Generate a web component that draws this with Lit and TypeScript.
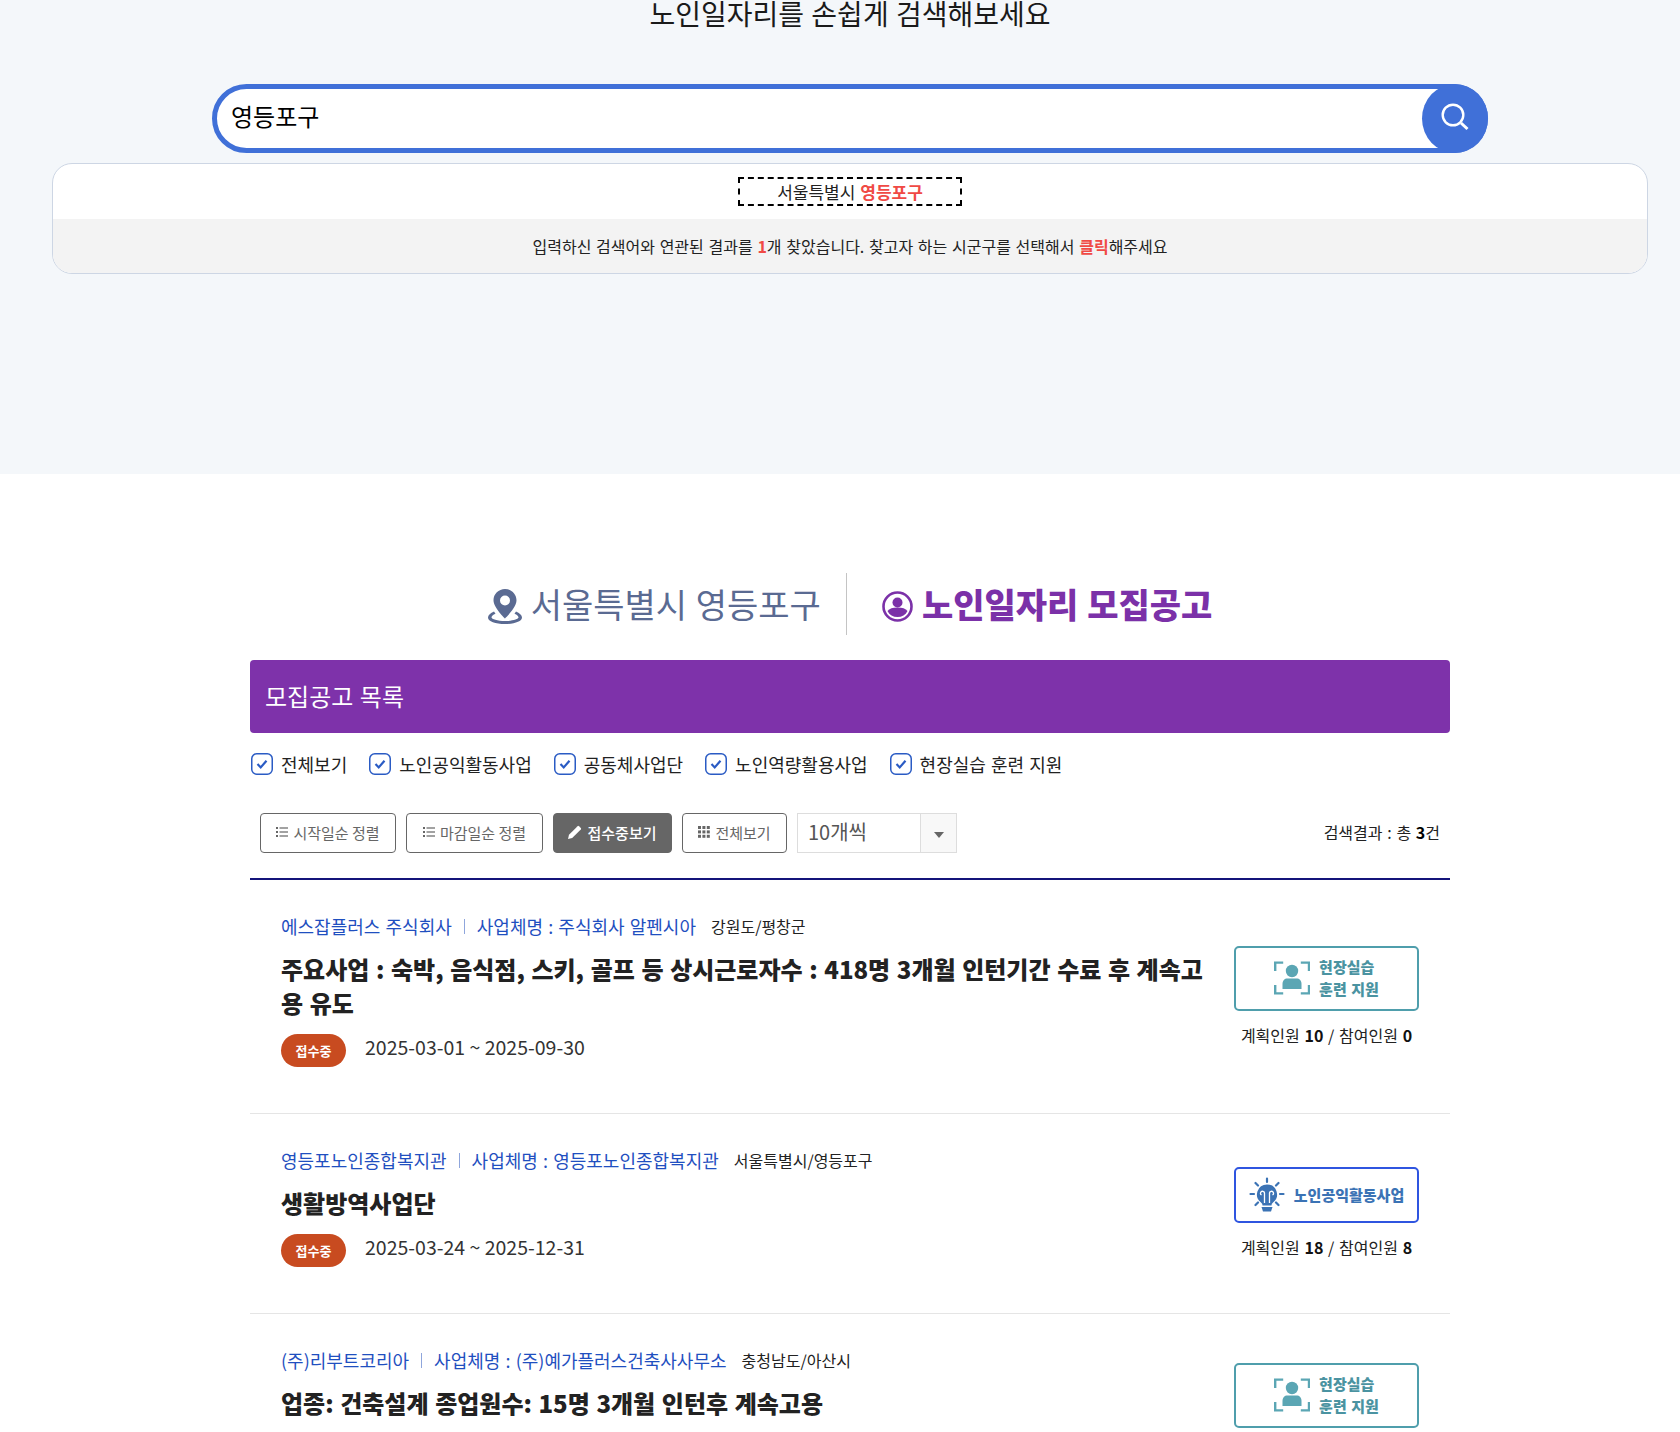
import { LitElement, html, css, svg } from 'lit';
import { customElement } from 'lit/decorators.js';

const checkIcon = html`<svg class="check" viewBox="0 0 22 22" width="22" height="22">
  <rect x="0.75" y="0.75" width="20.5" height="20.5" rx="5" fill="#fff" stroke="#2a5bc4" stroke-width="1.5"></rect>
  <path d="M6.5 11l3.2 3.4 5.8-6.6" fill="none" stroke="#2a5bc4" stroke-width="2.2"></path>
</svg>`;

const listIcon = html`<svg viewBox="0 0 12 12" width="12" height="12" fill="currentColor">
  <rect x="0" y="1" width="2" height="2"></rect><rect x="3.5" y="1.4" width="8.5" height="1.2"></rect>
  <rect x="0" y="5" width="2" height="2"></rect><rect x="3.5" y="5.4" width="8.5" height="1.2"></rect>
  <rect x="0" y="9" width="2" height="2"></rect><rect x="3.5" y="9.4" width="8.5" height="1.2"></rect>
</svg>`;

const gridIcon = html`<svg viewBox="0 0 12 12" width="12" height="12" fill="currentColor">
  ${[0, 4.4, 8.8].map((y) => [0, 4.4, 8.8].map((x) => svg`<rect x=${x} y=${y} width="3" height="3"></rect>`))}
</svg>`;

const pencilIcon = html`<svg viewBox="0 0 14 14" width="14" height="14" fill="#fff">
  <path d="M0 14l1-4.2L9.6 1.2a1 1 0 0 1 1.4 0l1.800 1.800a1 1 0 0 1 0 1.400L4.200 13z"></path>
</svg>`;

const fieldIcon = html`<svg viewBox="0 0 36 34" width="36" height="34">
  <g fill="none" stroke="#5ba6b4" stroke-width="2.4">
    <path d="M1.2 10V1.600h8M26.800 1.600h8.200V10M1.200 24v8.400h8M26.800 32.400h8.200V24"></path>
  </g>
  <circle cx="18" cy="10" r="6.200" fill="#5ba6b4"></circle>
  <path d="M8.500 28v-5c0-3.500 2-5.500 5-5.500h9c3 0 5 2 5 5.500v5z" fill="#5ba6b4"></path>
</svg>`;

const bulbIcon = html`<svg viewBox="0 0 36 36" width="36" height="36">
  <g stroke="#3b73b5" stroke-width="2.200" stroke-linecap="round">
    <path d="M18 1.500v3.500M6.500 6l2.500 2.500M29.500 6L27 8.500M1.500 17H5M31 17h3.500M6.500 28l2.500-2.500M29.500 28L27 25.500"></path>
  </g>
  <path d="M18 7.500a10 10 0 0 0-6 18c1 .8 1.500 1.800 1.500 3h9c0-1.200.5-2.200 1.500-3a10 10 0 0 0-6-18z" fill="#3b73b5"></path>
  <path d="M15.500 26v-9.500a2 2 0 1 0-3 1.500M20.500 26v-9.500a2 2 0 1 1 3 1.500" fill="none" stroke="#fff" stroke-width="1.300"></path>
  <path d="M12.500 30h11l-1.500 4.500h-8z" fill="#3b73b5"></path>
</svg>`;

interface Posting {
  org: string;
  biz: string;
  region: string;
  title: string;
  from: string;
  to: string;
  kind: 'field' | 'public';
  plan: number;
  joined: number;
}

const postings: Posting[] = [
  {
    org: '에스잡플러스 주식회사',
    biz: '주식회사 알펜시아',
    region: '강원도/평창군',
    title: '주요사업 : 숙박, 음식점, 스키, 골프 등 상시근로자수 : 418명 3개월 인턴기간 수료 후 계속고용 유도',
    from: '2025-03-01',
    to: '2025-09-30',
    kind: 'field',
    plan: 10,
    joined: 0,
  },
  {
    org: '영등포노인종합복지관',
    biz: '영등포노인종합복지관',
    region: '서울특별시/영등포구',
    title: '생활방역사업단',
    from: '2025-03-24',
    to: '2025-12-31',
    kind: 'public',
    plan: 18,
    joined: 8,
  },
  {
    org: '(주)리부트코리아',
    biz: '(주)예가플러스건축사사무소',
    region: '충청남도/아산시',
    title: '업종: 건축설계 종업원수: 15명 3개월 인턴후 계속고용',
    from: '2025-03-24',
    to: '2025-12-31',
    kind: 'field',
    plan: 5,
    joined: 0,
  },
];

const filters = ['전체보기', '노인공익활동사업', '공동체사업단', '노인역량활용사업', '현장실습 훈련 지원'];

@customElement('app-root')
export class AppRoot extends LitElement {
  static styles = css`
    :host {
      display: block;
      height: 1432px;
      overflow: hidden;
      background: #fff;
      color: #1a1a1a;
      font-family: "Noto Sans CJK KR", "Noto Sans", sans-serif;
      word-spacing: 0.07em;
    }

    .page {
      width: 1700px;
    }

    .hero {
      height: 474px;
      background: #f4f7fa;
      display: flex;
      flex-direction: column;
      align-items: center;
    }

    .hero h1 {
      margin: -1px 0 0;
      font-size: 28px;
      font-weight: 400;
      line-height: 28px;
      height: 41px;
    }

    .search {
      box-sizing: border-box;
      margin-top: 44px;
      width: 1276px;
      height: 69px;
      border: 5px solid #4070d8;
      border-radius: 35px;
      background: #fff;
      position: relative;
      display: flex;
      align-items: center;
      padding-left: 14px;
      font-size: 24px;
      line-height: 1;
    }

    .search span {
      margin-top: -6px;
      color: #000;
    }

    .search button {
      position: absolute;
      right: -5px;
      top: -5px;
      width: 66px;
      height: 69px;
      padding: 0 0 4px;
      border: 0;
      border-radius: 50%;
      background: #4070d8;
      display: flex;
      align-items: center;
      justify-content: center;
    }

    .suggest {
      box-sizing: border-box;
      margin-top: 10px;
      width: 1596px;
      height: 111px;
      border: 1px solid #cdd6e4;
      border-radius: 20px;
      background: #fff;
      overflow: hidden;
      text-align: center;
    }

    .suggest .hit {
      height: 55px;
      display: flex;
      align-items: flex-start;
      justify-content: center;
    }

    .suggest .hit a {
      box-sizing: border-box;
      margin-top: 13px;
      width: 224px;
      height: 29px;
      border: 2px dashed #000;
      font-size: 17px;
      line-height: 25px;
      color: #222;
    }

    .red {
      color: #f04a45;
      font-weight: 700;
    }

    .suggest .msg {
      height: 55px;
      background: #f3f3f3;
      font-size: 16px;
      line-height: 54px;
      color: #222;
    }

    .heading {
      margin-top: 99px;
      height: 62px;
      display: flex;
      justify-content: center;
      align-items: center;
      font-size: 34px;
      line-height: 44px;
    }

    .heading .place {
      display: flex;
      align-items: center;
      gap: 9px;
      color: #5a6a92;
      padding-right: 25px;
      border-right: 1px solid #c4c4c4;
      height: 62px;
    }

    .heading .place svg {
      margin-top: 4px;
    }

    .heading .notice {
      display: flex;
      align-items: center;
      gap: 9px;
      color: #7b31a8;
      font-weight: 900;
      padding-left: 35px;
    }

    .heading .notice svg {
      margin-top: 4px;
    }

    .board {
      width: 1200px;
      margin: 25px auto 0;
    }

    .bar {
      height: 73px;
      box-sizing: border-box;
      padding-left: 15px;
      background: #7e32aa;
      border-radius: 4px;
      color: #fff;
      font-size: 24px;
      line-height: 72px;
    }

    .filters {
      display: flex;
      gap: 22px;
      margin-top: 19px;
      padding-left: 1px;
      height: 24px;
      align-items: center;
      font-size: 18px;
      color: #222;
    }

    .filters label {
      display: flex;
      align-items: center;
      gap: 8px;
    }

    .tools {
      display: flex;
      align-items: center;
      gap: 10px;
      margin-top: 37px;
      padding: 0 10px;
      height: 40px;
    }

    .tools button {
      box-sizing: border-box;
      height: 40px;
      border: 1px solid #666;
      border-radius: 4px;
      background: #fff;
      color: #666;
      font: inherit;
      font-size: 15px;
      word-spacing: 0;
      display: flex;
      align-items: center;
      justify-content: center;
      gap: 5px;
      padding: 0 0 2px;
    }

    .tools button.on {
      background: #666;
      color: #fff;
      font-weight: 500;
    }

    .select {
      box-sizing: border-box;
      width: 160px;
      height: 40px;
      border: 1px solid #ddd;
      display: flex;
      font-size: 20px;
      line-height: 35px;
      color: #555;
    }

    .select span {
      flex: 1;
      padding-left: 10px;
    }

    .select i {
      width: 35px;
      background: #f8f8f8;
      border-left: 1px solid #ddd;
      display: flex;
      align-items: center;
      justify-content: center;
    }

    .select i::after {
      content: '';
      margin-top: 3px;
      border: 5px solid transparent;
      border-top: 6px solid #666;
      border-bottom: 0;
    }

    .count {
      margin-left: auto;
      margin-top: -2px;
      font-size: 16px;
      color: #222;
    }

    .count b {
      color: #000;
    }

    .list {
      margin-top: 25px;
      border-top: 2px solid #14147a;
    }

    .item {
      display: flex;
      align-items: center;
      gap: 20px;
      padding: 33px 31px 46px;
      border-bottom: 1px solid #e5e5e5;
    }

    .body {
      flex: 1;
      min-width: 0;
    }

    .meta {
      display: flex;
      align-items: center;
      height: 26px;
      font-size: 18px;
      color: #1f4fc0;
    }

    .meta .sep {
      width: 1px;
      height: 15px;
      margin: 0 12px;
      background: #8fa6dc;
    }

    .meta .region {
      margin-left: 15px;
      font-size: 16px;
      color: #222;
    }

    .item h3 {
      margin: 13px 0 0;
      font-size: 24px;
      line-height: 34px;
      font-weight: 900;
      color: #222;
    }

    .period {
      display: flex;
      align-items: center;
      gap: 19px;
      margin-top: 14px;
      font-size: 19.5px;
      color: #333;
      word-spacing: 0;
    }

    .badge {
      width: 65px;
      height: 33px;
      border-radius: 17px;
      background: #c84b20;
      color: #fff;
      font-size: 13px;
      font-weight: 700;
      line-height: 33px;
      text-align: center;
    }

    .period span:last-child {
      margin-top: -8px;
    }

    .side {
      width: 185px;
      flex: none;
      padding-top: 11px;
      text-align: center;
    }

    .kind {
      box-sizing: border-box;
      display: flex;
      align-items: center;
      justify-content: center;
      gap: 9px;
      border: 2px solid;
      border-radius: 5px;
      font-weight: 900;
      font-size: 15px;
      line-height: 22px;
      text-align: left;
    }

    .kind.field {
      height: 65px;
      border-color: #4f9eac;
      color: #4a93a1;
    }

    .kind.public {
      height: 56px;
      border-color: #2f55e0;
      color: #3b73b5;
    }

    .people {
      margin-top: 13px;
      font-size: 16px;
      line-height: 22px;
      color: #222;
    }

    .people b {
      color: #111;
    }
  `;

  renderKind(kind: Posting['kind']) {
    if (kind === 'field') {
      return html`<div class="kind field">${fieldIcon}<div>현장실습<br />훈련 지원</div></div>`;
    }
    return html`<div class="kind public">${bulbIcon}<div>노인공익활동사업</div></div>`;
  }

  renderItem(p: Posting) {
    return html`
      <article class="item">
        <div class="body">
          <div class="meta">
            <span>${p.org}</span><i class="sep"></i><span>사업체명 : ${p.biz}</span>
            <span class="region">${p.region}</span>
          </div>
          <h3>${p.title}</h3>
          <div class="period">
            <span class="badge">접수중</span>
            <span>${p.from} ~ ${p.to}</span>
          </div>
        </div>
        <div class="side">
          ${this.renderKind(p.kind)}
          <div class="people">계획인원 <b>${p.plan}</b> / 참여인원 <b>${p.joined}</b></div>
        </div>
      </article>
    `;
  }

  render() {
    return html`
      <div class="page">
        <section class="hero">
          <h1>노인일자리를 손쉽게 검색해보세요</h1>
          <div class="search">
            <span>영등포구</span>
            <button aria-label="검색">
              <svg viewBox="0 0 28 28" width="28" height="28" fill="none" stroke="#fff" stroke-width="2.400">
                <circle cx="12" cy="12" r="10.300"></circle>
                <path d="M20 20l6.500 6" stroke-width="3"></path>
              </svg>
            </button>
          </div>
          <div class="suggest">
            <div class="hit"><a>서울특별시 <span class="red">영등포구</span></a></div>
            <div class="msg">입력하신 검색어와 연관된 결과를 <span class="red">1</span>개 찾았습니다. 찾고자 하는 시군구를 선택해서 <span class="red">클릭</span>해주세요</div>
          </div>
        </section>

        <div class="heading">
          <div class="place">
            <svg viewBox="0 0 34 35" width="34" height="35" fill="#5a6a92">
              <path fill-rule="evenodd" d="M17 0c-6.400 0-11.500 5-11.500 11.200C5.500 18.500 17 29.500 17 29.500S28.500 18.500 28.500 11.200C28.500 5 23.400 0 17 0zm0 6.500a5 5 0 1 1 0 10 5 5 0 0 1 0-10z"></path>
              <path d="M6 22.500C2.500 24 0 26 0 28.500 0 32.500 7.500 35 17 35s17-2.500 17-6.500c0-2.500-2.500-4.500-6-6l-1.500 2.200c2.500 1 4 2.400 4 3.800 0 1.500-6 3.500-13.500 3.500S3.500 30 3.500 28.500c0-1.400 1.500-2.800 4-3.800z"></path>
            </svg>
            <span>서울특별시 영등포구</span>
          </div>
          <div class="notice">
            <svg viewBox="0 0 31 31" width="31" height="31">
              <circle cx="15.500" cy="15.500" r="14" fill="none" stroke="#7b31a8" stroke-width="2.600"></circle>
              <circle cx="15.500" cy="11.500" r="5" fill="#7b31a8"></circle>
              <path d="M5.500 20c2-2.500 5-3.500 10-3.500s8 1 10 3.500c-2 4-5.500 6-10 6s-8-2-10-6z" fill="#7b31a8"></path>
            </svg>
            <span>노인일자리 모집공고</span>
          </div>
        </div>

        <main class="board">
          <div class="bar">모집공고 목록</div>
          <div class="filters">
            ${filters.map((f) => html`<label>${checkIcon}<span>${f}</span></label>`)}
          </div>
          <div class="tools">
            <button style="width:136px">${listIcon}<span>시작일순 정렬</span></button>
            <button style="width:137px">${listIcon}<span>마감일순 정렬</span></button>
            <button class="on" style="width:119px">${pencilIcon}<span>접수중보기</span></button>
            <button style="width:105px">${gridIcon}<span>전체보기</span></button>
            <div class="select"><span>10개씩</span><i></i></div>
            <div class="count">검색결과 : 총 <b>3</b>건</div>
          </div>
          <div class="list">
            ${postings.map((p) => this.renderItem(p))}
          </div>
        </main>
      </div>
    `;
  }
}
